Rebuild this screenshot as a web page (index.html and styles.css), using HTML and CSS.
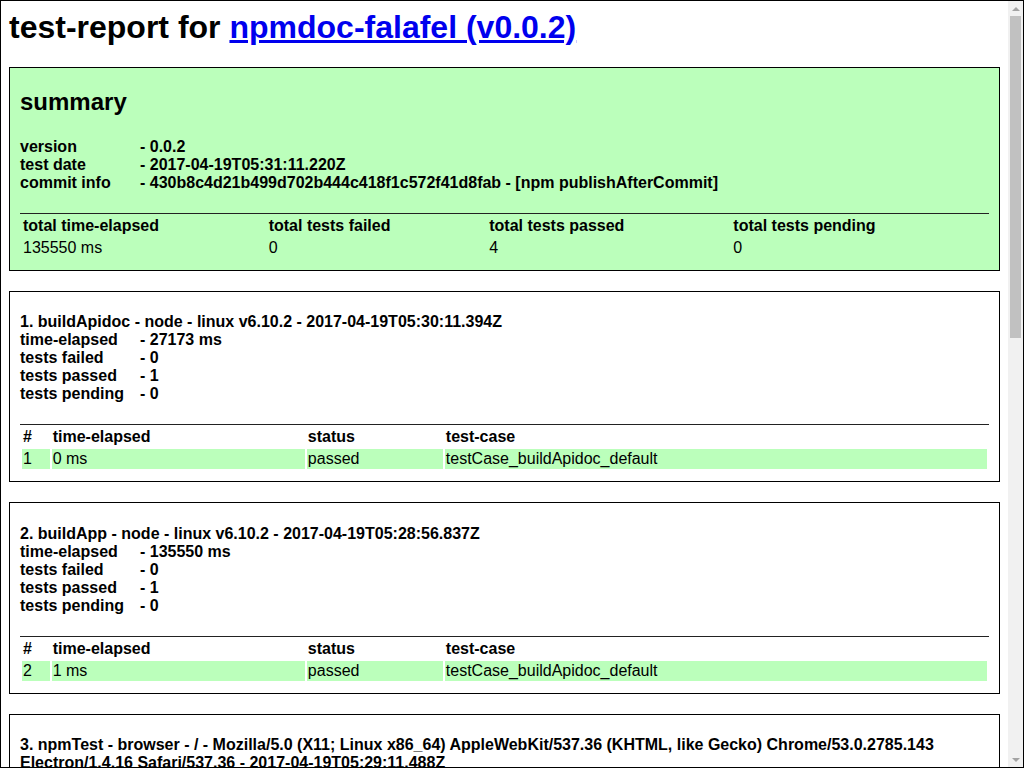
FILE: index.html
```html
<!DOCTYPE html>
<html>
<head>
<meta charset="utf-8">
<title>test-report for npmdoc-falafel</title>
<link rel="stylesheet" href="styles.css">
</head>
<body>
<div class="viewport">
<div class="testReportDiv">
<h1>test-report for <a href="https://github.com/npmdoc/node-npmdoc-falafel">npmdoc-falafel (v0.0.2)</a></h1>

<div class="platform summary">
<h2>summary</h2>
<h4>
<span>version</span>- 0.0.2<br>
<span>test date</span>- 2017-04-19T05:31:11.220Z<br>
<span>commit info</span>- 430b8c4d21b499d702b444c418f1c572f41d8fab - [npm publishAfterCommit]<br>
</h4>
<table>
<thead>
<tr><th>total time-elapsed</th><th>total tests failed</th><th>total tests passed</th><th>total tests pending</th></tr>
</thead>
<tbody>
<tr><td>135550 ms</td><td>0</td><td>4</td><td>0</td></tr>
</tbody>
</table>
</div>

<div class="platform">
<h4>
1. buildApidoc - node - linux v6.10.2 - 2017-04-19T05:30:11.394Z<br>
<span>time-elapsed</span>- 27173 ms<br>
<span>tests failed</span>- 0<br>
<span>tests passed</span>- 1<br>
<span>tests pending</span>- 0<br>
</h4>
<table>
<thead>
<tr><th>#</th><th>time-elapsed</th><th>status</th><th>test-case</th></tr>
</thead>
<tbody>
<tr><td>1</td><td>0 ms</td><td>passed</td><td>testCase_buildApidoc_default</td></tr>
</tbody>
</table>
</div>

<div class="platform">
<h4>
2. buildApp - node - linux v6.10.2 - 2017-04-19T05:28:56.837Z<br>
<span>time-elapsed</span>- 135550 ms<br>
<span>tests failed</span>- 0<br>
<span>tests passed</span>- 1<br>
<span>tests pending</span>- 0<br>
</h4>
<table>
<thead>
<tr><th>#</th><th>time-elapsed</th><th>status</th><th>test-case</th></tr>
</thead>
<tbody>
<tr><td>2</td><td>1 ms</td><td>passed</td><td>testCase_buildApidoc_default</td></tr>
</tbody>
</table>
</div>

<div class="platform">
<h4>
3. npmTest - browser - / - Mozilla/5.0 (X11; Linux x86_64) AppleWebKit/537.36 (KHTML, like Gecko) Chrome/53.0.2785.143 Electron/1.4.16 Safari/537.36 - 2017-04-19T05:29:11.488Z<br>
<span>time-elapsed</span>- 1450 ms<br>
<span>tests failed</span>- 0<br>
<span>tests passed</span>- 1<br>
<span>tests pending</span>- 0<br>
</h4>
<table>
<thead>
<tr><th>#</th><th>time-elapsed</th><th>status</th><th>test-case</th></tr>
</thead>
<tbody>
<tr><td>3</td><td>5 ms</td><td>passed</td><td>testCase_webpage_default</td></tr>
</tbody>
</table>
</div>
</div>
</div>
<div class="scrollbar" aria-hidden="true">
<div class="sb-button sb-up"><div class="sb-arrow-up"></div></div>
<div class="sb-track"><div class="sb-thumb"></div></div>
<div class="sb-button sb-down"><div class="sb-arrow-down"></div></div>
</div>
</body>
</html>
```

FILE: styles.css
```css
html {
  height: 100%;
  overflow: hidden;
}

body {
  margin: 0;
  height: 100%;
  box-sizing: border-box;
  border: 1px solid #000;
  overflow: hidden;
  display: flex;
  background: #fff;
  font-family: "Liberation Sans", Arial, Helvetica, sans-serif;
  color: #000;
}

.viewport {
  flex: 1;
  min-width: 0;
  overflow: hidden;
}

.testReportDiv {
  padding: 8px 8px 8px;
}

.testReportDiv h1 {
  font-size: 32px;
  margin: 0 0 0.67em;
}

.testReportDiv h1 a {
  color: #00e;
}

.testReportDiv h2 {
  font-size: 24px;
  margin: 0.83em 0;
}

.testReportDiv h4 {
  font-size: 16px;
  margin: 1.33em 0;
}

.testReportDiv span {
  display: inline-block;
  width: 120px;
}

.testReportDiv table {
  border-top: 1px solid #222;
  text-align: left;
  width: 100%;
  border-spacing: 2px;
  font-size: 16px;
}

.testReportDiv th,
.testReportDiv td {
  padding: 1px;
}

.testReportDiv table > tbody > tr:nth-child(odd) {
  background-color: #bfb;
}

.testReportDiv .platform {
  background-color: #fff;
  border: 1px solid #000;
  margin-bottom: 20px;
  padding: 0 10px 10px 10px;
  text-align: left;
}

.testReportDiv .summary {
  background-color: #bfb;
}

/* scrollbar */
.scrollbar {
  width: 15px;
  flex: none;
  display: flex;
  flex-direction: column;
  background: #f1f1f1;
}

.sb-button {
  height: 15px;
  flex: none;
  display: flex;
  align-items: center;
  justify-content: center;
}

.sb-arrow-up {
  width: 0;
  height: 0;
  border-left: 4px solid transparent;
  border-right: 4px solid transparent;
  border-bottom: 4px solid #a3a3a3;
}

.sb-arrow-down {
  width: 0;
  height: 0;
  border-left: 4px solid transparent;
  border-right: 4px solid transparent;
  border-top: 4px solid #a3a3a3;
}

.sb-track {
  flex: 1;
  padding: 0 2px;
}

.sb-thumb {
  height: 322px;
  background: #c1c1c1;
}
```
